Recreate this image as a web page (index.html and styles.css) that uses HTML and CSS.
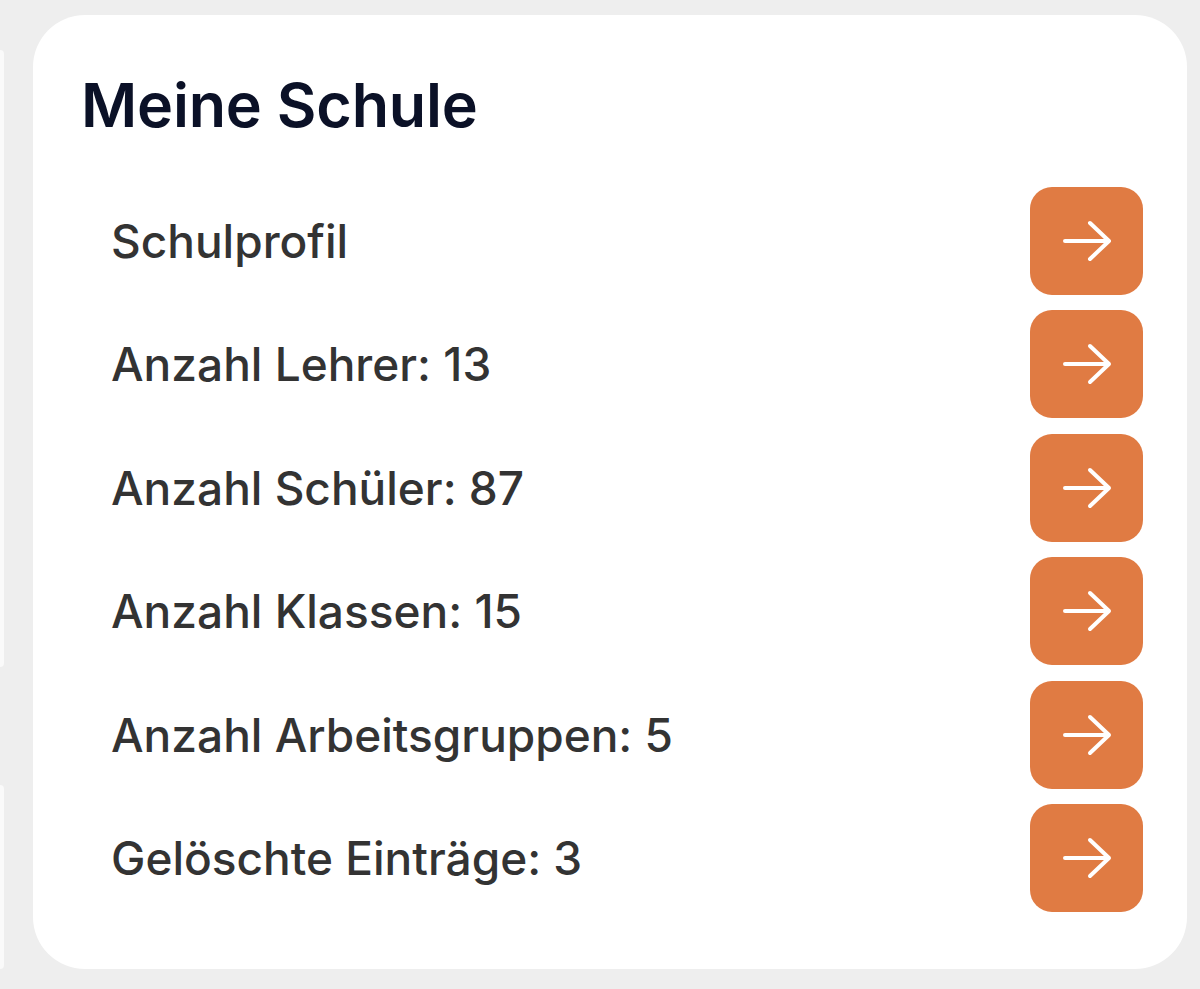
FILE: index.html
```html
<!DOCTYPE html>
<html>
<head lang="de">
    <meta charset="UTF-8">
    <title>Meine Schule</title>
    <link rel="stylesheet" href="styles.css">
</head>
<body>
<div class="page">
    <div class="side">
        <div class="side-top"></div>
        <div class="side-bottom"></div>
    </div>
    <div class="card">
        <h1 class="title">Meine Schule</h1>
        <ul class="list">
            <li class="row"><span class="label">Schulprofil</span><a class="go" href="#"><svg viewBox="0 0 52 42" width="52" height="42"><path d="M4 21H48M29 3L48 21L29 39"/></svg></a></li>
            <li class="row"><span class="label">Anzahl Lehrer: 13</span><a class="go" href="#"><svg viewBox="0 0 52 42" width="52" height="42"><path d="M4 21H48M29 3L48 21L29 39"/></svg></a></li>
            <li class="row"><span class="label">Anzahl Schüler: 87</span><a class="go" href="#"><svg viewBox="0 0 52 42" width="52" height="42"><path d="M4 21H48M29 3L48 21L29 39"/></svg></a></li>
            <li class="row"><span class="label">Anzahl Klassen: 15</span><a class="go" href="#"><svg viewBox="0 0 52 42" width="52" height="42"><path d="M4 21H48M29 3L48 21L29 39"/></svg></a></li>
            <li class="row"><span class="label">Anzahl Arbeitsgruppen: 5</span><a class="go" href="#"><svg viewBox="0 0 52 42" width="52" height="42"><path d="M4 21H48M29 3L48 21L29 39"/></svg></a></li>
            <li class="row"><span class="label">Gelöschte Einträge: 3</span><a class="go" href="#"><svg viewBox="0 0 52 42" width="52" height="42"><path d="M4 21H48M29 3L48 21L29 39"/></svg></a></li>
        </ul>
    </div>
</div>
</body>
</html>
```

FILE: styles.css
```css
* {
    margin: 0;
    padding: 0;
    box-sizing: border-box;
}

body, html {
    width: 100%;
    height: 100%;
    background-color: #eeeeee;
    overflow: hidden;
}

.page {
    display: flex;
    padding-top: 15px;
}

.side {
    width: 4px;
    display: flex;
    flex-direction: column;
    padding-top: 35px;
    gap: 118px;
}

.side-top {
    height: 617px;
    background-color: #fafafa;
    border-radius: 0 4px 4px 0;
}

.side-bottom {
    height: 184px;
    background-color: #fafafa;
    border-radius: 0 4px 4px 0;
}

.card {
    margin-left: 29px;
    width: 1154px;
    background-color: #fff;
    border-radius: 52px;
    padding: 53px 44px 57px 48px;
}

.title {
    font-family: "Inter", "Lato", sans-serif;
    font-weight: 580;
    font-size: 61px;
    line-height: 74px;
    color: #0b1127;
    letter-spacing: -0.2px;
}

.list {
    list-style: none;
    margin-top: 45px;
    display: flex;
    flex-direction: column;
    gap: 15.4px;
}

.row {
    height: 108px;
    display: flex;
    align-items: center;
    justify-content: space-between;
    padding-left: 30px;
}

.label {
    font-family: "Inter", "Noto Sans", sans-serif;
    font-size: 46px;
    font-weight: 450;
    color: #333333;
}

.go {
    width: 113px;
    height: 108px;
    border-radius: 22px;
    background-color: #e07b43;
    display: flex;
    align-items: center;
    justify-content: center;
}

.go svg {
    fill: none;
    stroke: #fff;
    stroke-width: 4;
    stroke-linecap: round;
    stroke-linejoin: round;
}
```
